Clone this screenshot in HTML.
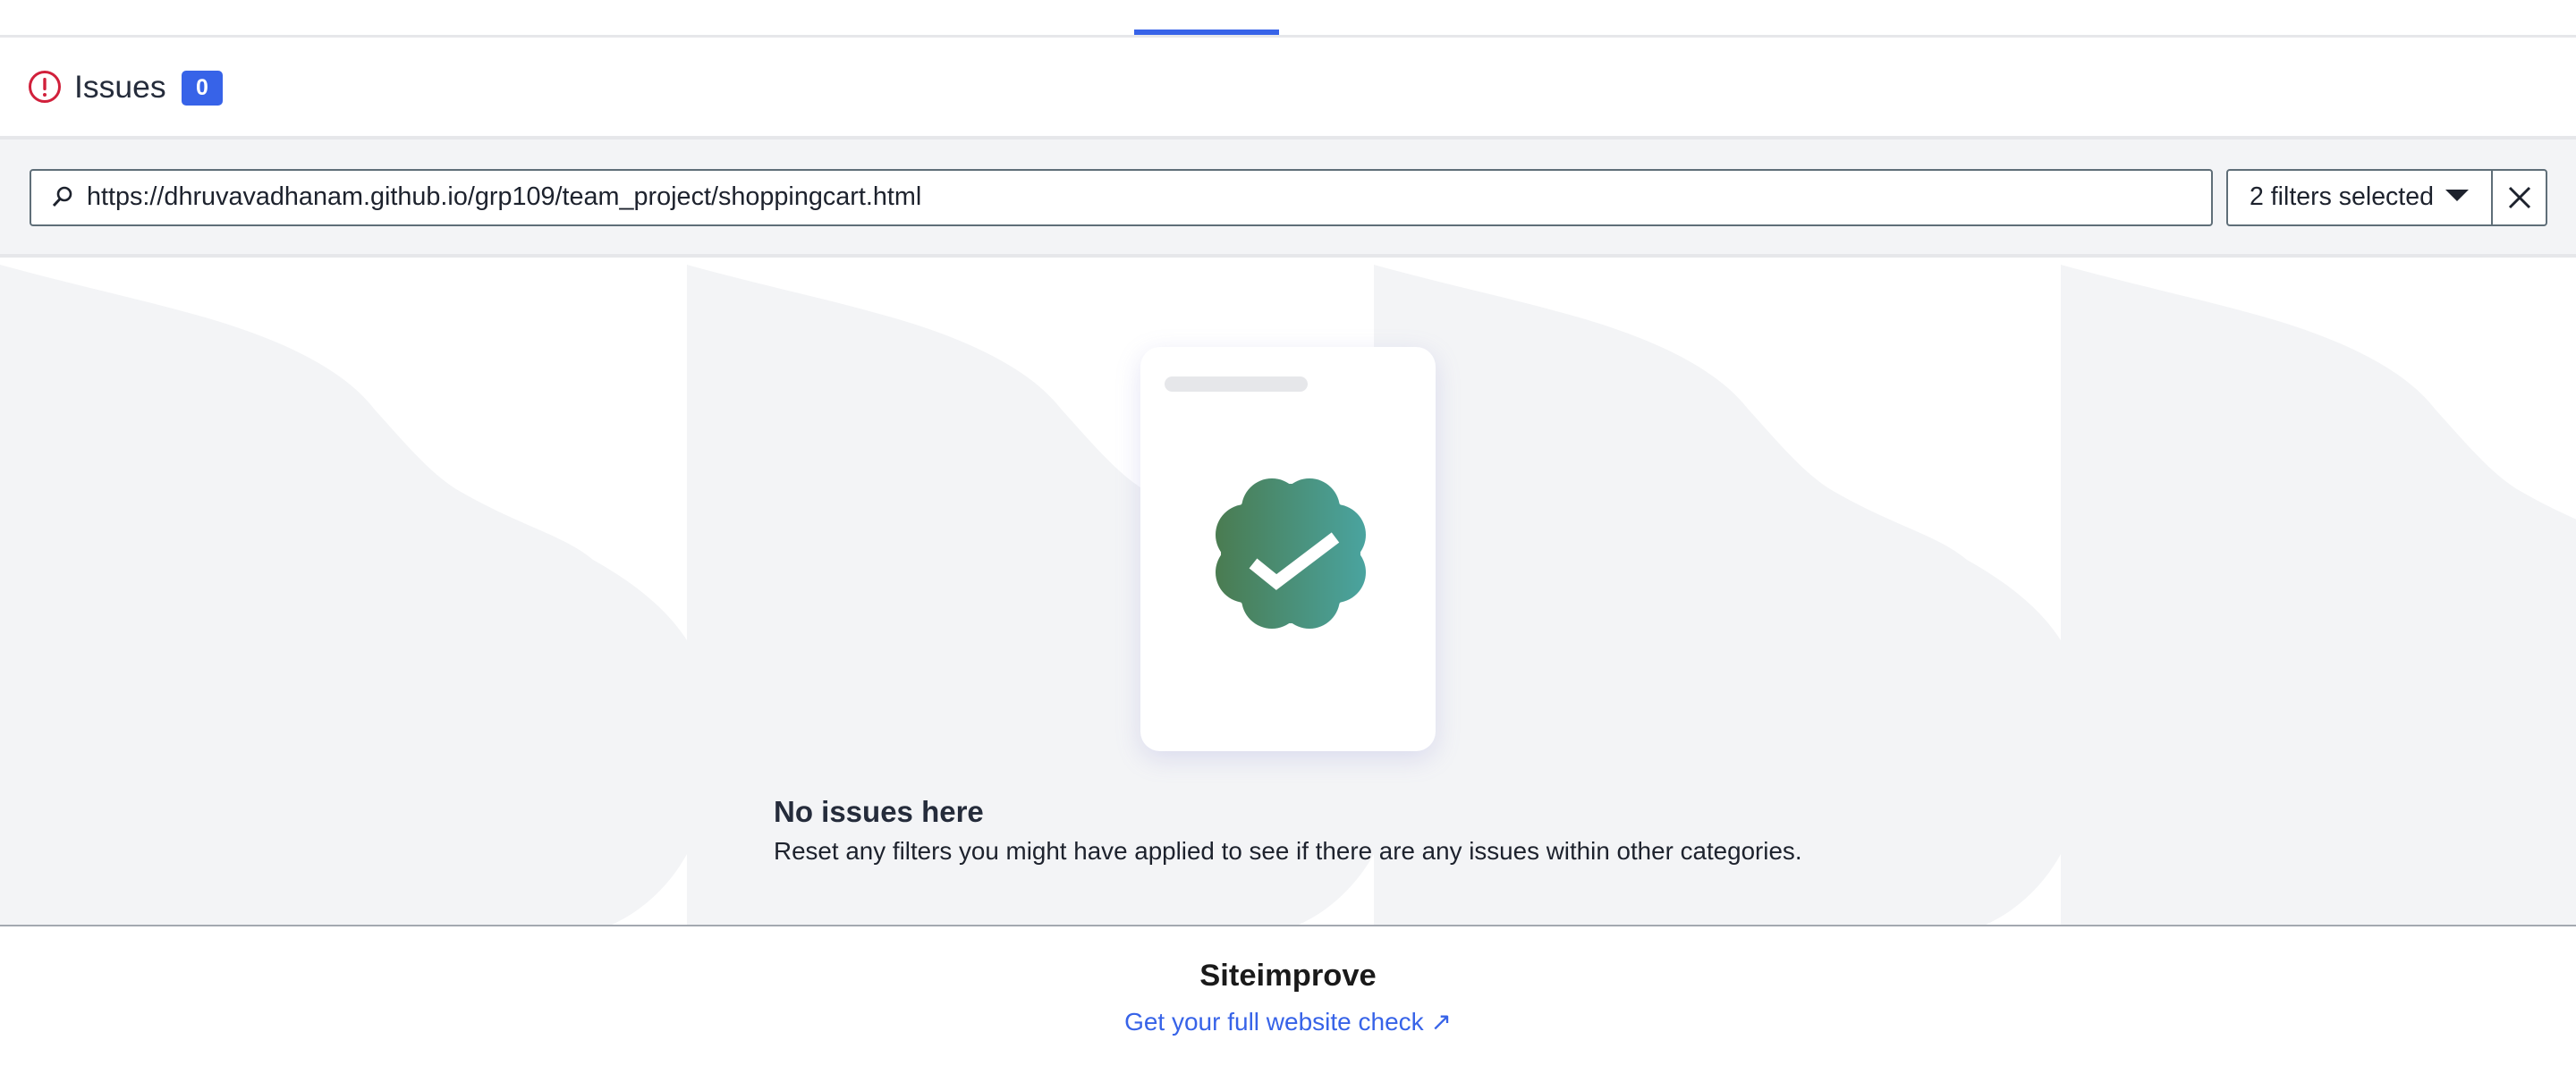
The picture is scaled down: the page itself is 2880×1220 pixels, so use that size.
<!DOCTYPE html>
<html><head><meta charset="utf-8"><style>
*{margin:0;padding:0;box-sizing:border-box}
body{width:2880px;height:1220px;overflow:hidden;background:#fff;font-family:"Liberation Sans",sans-serif;color:#252c3b;position:relative}
.abs{position:absolute}
</style></head><body>
<div class="abs" style="left:0;top:39px;width:2880px;height:3px;background:#e6e7ea"></div>
<div class="abs" style="left:1268px;top:33px;width:162px;height:6px;background:#3763e8"></div>

<svg class="abs" style="left:31px;top:78px" width="38" height="38" viewBox="0 0 38 38"><circle cx="19" cy="19" r="16.5" fill="none" stroke="#d1203b" stroke-width="3"/><rect x="17.3" y="9" width="3.4" height="14" rx="1.5" fill="#d1203b"/><circle cx="19" cy="28" r="2" fill="#d1203b"/></svg>
<div class="abs" style="left:83px;top:75px;font-size:35.5px;line-height:44px;color:#252c3b">Issues</div>
<div class="abs" style="left:203px;top:79px;width:46px;height:39px;border-radius:5px;background:#3763e8;color:#fff;font-size:25px;font-weight:bold;line-height:39px;text-align:center">0</div>

<div class="abs" style="left:0;top:152px;width:2880px;height:136px;background:#f3f4f6;border-top:4px solid #e6e7ea;border-bottom:4px solid #e6e7ea"></div>
<div class="abs" style="left:33px;top:189px;width:2441px;height:64px;background:#fff;border:2px solid #5f6e78;border-radius:4px"></div>
<svg class="abs" style="left:56px;top:206px" width="28" height="28" viewBox="0 0 28 28"><circle cx="16" cy="11" r="7" fill="none" stroke="#1d222d" stroke-width="2.6"/><line x1="11" y1="16.5" x2="4" y2="24" stroke="#1d222d" stroke-width="3"/></svg>
<div class="abs" style="left:97px;top:203px;font-size:28.8px;line-height:34px;color:#1d222d">https://dhruvavadhanam.github.io/grp109/team_project/shoppingcart.html</div>

<div class="abs" style="left:2489px;top:189px;width:359px;height:64px;background:#fff;border:2px solid #5f6e78;border-radius:4px"></div>
<div class="abs" style="left:2785px;top:189px;width:2px;height:64px;background:#5f6e78"></div>
<div class="abs" style="left:2515px;top:203px;font-size:28.5px;line-height:34px;color:#1d222d">2 filters selected</div>
<svg class="abs" style="left:2733px;top:211px" width="28" height="16" viewBox="0 0 28 16"><path d="M1 1H27L14 14Z" fill="#1d222d"/></svg>
<svg class="abs" style="left:2803px;top:207px" width="28" height="28" viewBox="0 0 28 28"><path d="M3 3L25 25M25 3L3 25" stroke="#1d222d" stroke-width="3"/></svg>

<svg class="abs" style="left:0;top:288px" width="2880" height="746" viewBox="0 0 2880 746">
<defs>
<path id="t" d="M0 8 C80 30 150 45 204 60 C300 85 380 120 418 169 C455 210 480 240 510 259 C580 300 630 310 663 338 C720 370 750 400 768 428 L768 0 L0 0 Z M768 667 C750 700 720 730 684 746 L768 746 Z" fill="#fff"/>
</defs>
<rect width="2880" height="746" fill="#f3f4f6"/>
<use href="#t" x="0"/><use href="#t" x="768"/><use href="#t" x="1536"/><use href="#t" x="2304"/>
</svg>

<div class="abs" style="left:1275px;top:388px;width:330px;height:452px;background:#fff;border-radius:22px;box-shadow:0 8px 28px rgba(130,130,210,0.22)"></div>
<div class="abs" style="left:1302px;top:421px;width:160px;height:17px;background:#e6e7ea;border-radius:9px"></div>
<svg class="abs" style="left:1343px;top:519px" width="200" height="200" viewBox="-100 -100 200 200">
<defs><linearGradient id="g" x1="-90" y1="0" x2="90" y2="0" gradientUnits="userSpaceOnUse"><stop offset="0" stop-color="#4a7a4e"/><stop offset="1" stop-color="#4aa5a2"/></linearGradient></defs>
<g fill="url(#g)">
<circle r="78"/>
<circle cx="21" cy="-50" r="34"/><circle cx="-21" cy="-50" r="34"/>
<circle cx="21" cy="50" r="34"/><circle cx="-21" cy="50" r="34"/>
<circle cx="50" cy="21" r="34"/><circle cx="50" cy="-21" r="34"/>
<circle cx="-50" cy="21" r="34"/><circle cx="-50" cy="-21" r="34"/>
</g>
<path d="M-42 11 L-16 32 L50 -18" fill="none" stroke="#fff" stroke-width="14"/>
</svg>

<div class="abs" style="left:865px;top:888px;font-size:33px;font-weight:bold;line-height:40px;color:#252c3b">No issues here</div>
<div class="abs" style="left:865px;top:936px;font-size:27.8px;line-height:32px;color:#1d222d">Reset any filters you might have applied to see if there are any issues within other categories.</div>

<div class="abs" style="left:0;top:1034px;width:2880px;height:2px;background:#a3a8b0"></div>
<div class="abs" style="left:0;top:1071px;width:2880px;text-align:center;font-size:34.5px;font-weight:bold;line-height:40px;color:#1a1a1a">Siteimprove</div>
<div class="abs" style="left:0;top:1126px;width:2880px;text-align:center;font-size:28px;line-height:34px;color:#3763e8">Get your full website check ↗</div>
</body></html>
